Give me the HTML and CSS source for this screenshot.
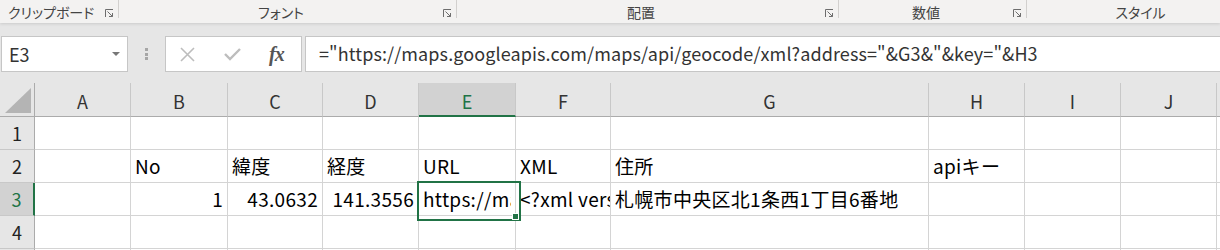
FILE: index.html
```html
<!DOCTYPE html>
<html lang="ja">
<head>
    <meta charset="UTF-8">
    <title>Excel - geocode</title>
    <link rel="stylesheet" href="styles.css">
</head>
<body>

<!-- Ribbon group labels -->
<div class="ribbon">
    <div class="group group-clip">
        <span class="group-label">クリップボード</span>
        <svg class="launcher" width="9" height="9" viewBox="0 0 9 9"><path d="M0.5 8V0.5H8" fill="none" stroke="#6d6d6d"/><path d="M2.5 2.5L7.5 7.5M4 7.5H7.5V4" fill="none" stroke="#6d6d6d"/></svg>
    </div>
    <div class="group group-font">
        <span class="group-label">フォント</span>
        <svg class="launcher" width="9" height="9" viewBox="0 0 9 9"><path d="M0.5 8V0.5H8" fill="none" stroke="#6d6d6d"/><path d="M2.5 2.5L7.5 7.5M4 7.5H7.5V4" fill="none" stroke="#6d6d6d"/></svg>
    </div>
    <div class="group group-align">
        <span class="group-label">配置</span>
        <svg class="launcher" width="9" height="9" viewBox="0 0 9 9"><path d="M0.5 8V0.5H8" fill="none" stroke="#6d6d6d"/><path d="M2.5 2.5L7.5 7.5M4 7.5H7.5V4" fill="none" stroke="#6d6d6d"/></svg>
    </div>
    <div class="group group-number">
        <span class="group-label">数値</span>
        <svg class="launcher" width="9" height="9" viewBox="0 0 9 9"><path d="M0.5 8V0.5H8" fill="none" stroke="#6d6d6d"/><path d="M2.5 2.5L7.5 7.5M4 7.5H7.5V4" fill="none" stroke="#6d6d6d"/></svg>
    </div>
    <div class="group group-style">
        <span class="group-label">スタイル</span>
    </div>
</div>

<!-- Formula bar -->
<div class="formula-bar">
    <div class="name-box">
        <span>E3</span>
        <svg width="8" height="4" viewBox="0 0 8 4"><path d="M0 0H8L4 4Z" fill="#777"/></svg>
    </div>
    <div class="grip">
        <i></i><i></i><i></i>
    </div>
    <div class="fx-buttons">
        <svg width="15" height="15" viewBox="0 0 15 15"><path d="M1 1L14 14M14 1L1 14" stroke="#bdbdbd" stroke-width="1.6" fill="none"/></svg>
        <svg width="17" height="14" viewBox="0 0 17 14"><path d="M1 7L6 12L16 2" stroke="#bdbdbd" stroke-width="2.4" fill="none"/></svg>
        <span class="fx">fx</span>
    </div>
    <div class="formula-input">="https://maps.googleapis.com/maps/api/geocode/xml?address="&amp;G3&amp;"&amp;key="&amp;H3</div>
</div>

<!-- Sheet -->
<div class="sheet">
    <div class="corner"><svg width="26" height="25" viewBox="0 0 26 25"><path d="M26 0V25H0Z" fill="#b4b4b4"/></svg></div>
    <div class="col-head">A</div>
    <div class="col-head">B</div>
    <div class="col-head">C</div>
    <div class="col-head">D</div>
    <div class="col-head active">E</div>
    <div class="col-head">F</div>
    <div class="col-head">G</div>
    <div class="col-head">H</div>
    <div class="col-head">I</div>
    <div class="col-head">J</div>
    <div class="col-head"></div>

    <div class="row-head">1</div>
    <div class="cell"></div><div class="cell"></div><div class="cell"></div><div class="cell"></div><div class="cell"></div>
    <div class="cell"></div><div class="cell"></div><div class="cell"></div><div class="cell"></div><div class="cell"></div><div class="cell"></div>

    <div class="row-head">2</div>
    <div class="cell"></div>
    <div class="cell">No</div>
    <div class="cell">緯度</div>
    <div class="cell">経度</div>
    <div class="cell">URL</div>
    <div class="cell">XML</div>
    <div class="cell">住所</div>
    <div class="cell">apiキー</div>
    <div class="cell"></div><div class="cell"></div><div class="cell"></div>

    <div class="row-head active">3</div>
    <div class="cell"></div>
    <div class="cell num">1</div>
    <div class="cell num">43.0632</div>
    <div class="cell num">141.3556</div>
    <div class="cell selected"><span class="clip">https://maps.googleapis.com/maps/api/geocode/xml?address=</span></div>
    <div class="cell">&lt;?xml version="1.0" encoding="UTF-8"?&gt;</div>
    <div class="cell">札幌市中央区北1条西1丁目6番地</div>
    <div class="cell"></div><div class="cell"></div><div class="cell"></div><div class="cell"></div>

    <div class="row-head">4</div>
    <div class="cell"></div><div class="cell"></div><div class="cell"></div><div class="cell"></div><div class="cell"></div>
    <div class="cell"></div><div class="cell"></div><div class="cell"></div><div class="cell"></div><div class="cell"></div><div class="cell"></div>

    <div class="row-head"></div>
    <div class="cell"></div><div class="cell"></div><div class="cell"></div><div class="cell"></div><div class="cell"></div>
    <div class="cell"></div><div class="cell"></div><div class="cell"></div><div class="cell"></div><div class="cell"></div><div class="cell"></div>
</div>

</body>
</html>
```

FILE: styles.css
```css
* {
    box-sizing: border-box;
}

body {
    margin: 0;
    width: 1220px;
    height: 250px;
    overflow: hidden;
    background-color: #e6e6e6;
    font-family: "Noto Sans CJK JP", "Noto Sans", sans-serif;
    color: #000;
}

/* Ribbon group labels */
.ribbon {
    display: flex;
    height: 23px;
    background-color: #f3f2f1;
    box-shadow: 0 1px 3px rgba(0, 0, 0, 0.12);
    position: relative;
}

.group {
    display: flex;
    align-items: flex-start;
    height: 18px;
    flex-shrink: 0;
    border-right: 1px solid #d2d0ce;
}

.group-label {
    flex: 1;
    text-align: center;
    font-size: 14px;
    line-height: 18px;
    padding-top: 3px;
    color: #444;
    font-feature-settings: "palt";
}

.launcher {
    margin: 9px 4px 0 0;
}

.group-clip { width: 119px; }
.group-clip .group-label { text-align: left; padding-left: 8px; }
.group-font { width: 338px; }
.group-align { width: 382px; }
.group-number { width: 188px; }
.group-style { width: 227px; border-right: none; }

/* Formula bar */
.formula-bar {
    display: flex;
    align-items: flex-start;
    height: 60px;
    padding-top: 13px;
    padding-left: 1px;
}

.name-box {
    width: 127px;
    height: 36px;
    background-color: white;
    border: 1px solid #c6c6c6;
    display: flex;
    align-items: center;
    justify-content: space-between;
    padding: 0 7px;
    font-size: 18px;
    color: #333;
}

.grip {
    width: 37px;
    height: 36px;
    display: flex;
    flex-direction: column;
    align-items: center;
    justify-content: center;
    gap: 1.5px;
}

.grip i {
    display: block;
    width: 3px;
    height: 3px;
    background-color: #a6a6a6;
}

.fx-buttons {
    width: 137px;
    height: 36px;
    background-color: white;
    border: 1px solid #c6c6c6;
    display: flex;
    align-items: center;
    padding-left: 14px;
    gap: 29px;
}

.fx {
    font-family: "Liberation Serif", serif;
    font-style: italic;
    font-size: 20px;
    font-weight: bold;
    color: #555;
    letter-spacing: -1px;
    margin-left: -1px;
}

.formula-input {
    flex: 1;
    height: 36px;
    margin-left: 3px;
    background-color: white;
    border: 1px solid #c6c6c6;
    border-right: none;
    padding-left: 13px;
    font-size: 18px;
    letter-spacing: 0.1px;
    line-height: 33px;
    color: #333;
    white-space: nowrap;
    overflow: hidden;
}

/* Sheet grid */
.sheet {
    display: grid;
    grid-template-columns: 35px 96px 97px 95px 96px 97px 95px 318px 96px 96px 96px 1fr;
    grid-template-rows: 34px repeat(5, 33px);
    background-color: white;
    font-size: 18px;
}

.corner {
    background-color: #e6e6e6;
    border-right: 1px solid #ababab;
    border-bottom: 1px solid #ababab;
    display: flex;
    align-items: flex-end;
    justify-content: flex-end;
    padding: 0 3px 3px 0;
}

.col-head {
    background-color: #e6e6e6;
    border-right: 1px solid #c8c8c8;
    border-bottom: 1px solid #ababab;
    text-align: center;
    line-height: 18px;
    padding-top: 9px;
    color: #333;
}

.col-head.active {
    background-color: #d2d2d2;
    color: #217346;
    border-bottom: 2px solid #217346;
}

.row-head {
    background-color: #e6e6e6;
    border-right: 1px solid #ababab;
    border-bottom: 1px solid #c8c8c8;
    text-align: center;
    line-height: 18px;
    padding-top: 7px;
    color: #222;
}

.row-head.active {
    background-color: #d2d2d2;
    color: #217346;
    border-right: 2px solid #217346;
}

.cell {
    border-right: 1px solid #d4d4d4;
    border-bottom: 1px solid #d4d4d4;
    padding: 7px 4px 0 4px;
    font-size: 19px;
    letter-spacing: 0.3px;
    line-height: 18px;
    white-space: nowrap;
    overflow: hidden;
}

.cell.num {
    text-align: right;
    letter-spacing: 0.3px;
}

.cell.selected {
    position: relative;
    overflow: visible;
}

.cell.selected .clip {
    display: block;
    overflow: hidden;
    height: 22px;
}

/* green selection frame and fill handle */
.cell.selected::before {
    content: "";
    position: absolute;
    left: -2px;
    top: -2px;
    width: 100px;
    height: 36px;
    border: 2px solid #217346;
}

.cell.selected::after {
    content: "";
    position: absolute;
    left: 94px;
    top: 31px;
    width: 5px;
    height: 5px;
    background-color: #217346;
    outline: 1px solid white;
}
```
